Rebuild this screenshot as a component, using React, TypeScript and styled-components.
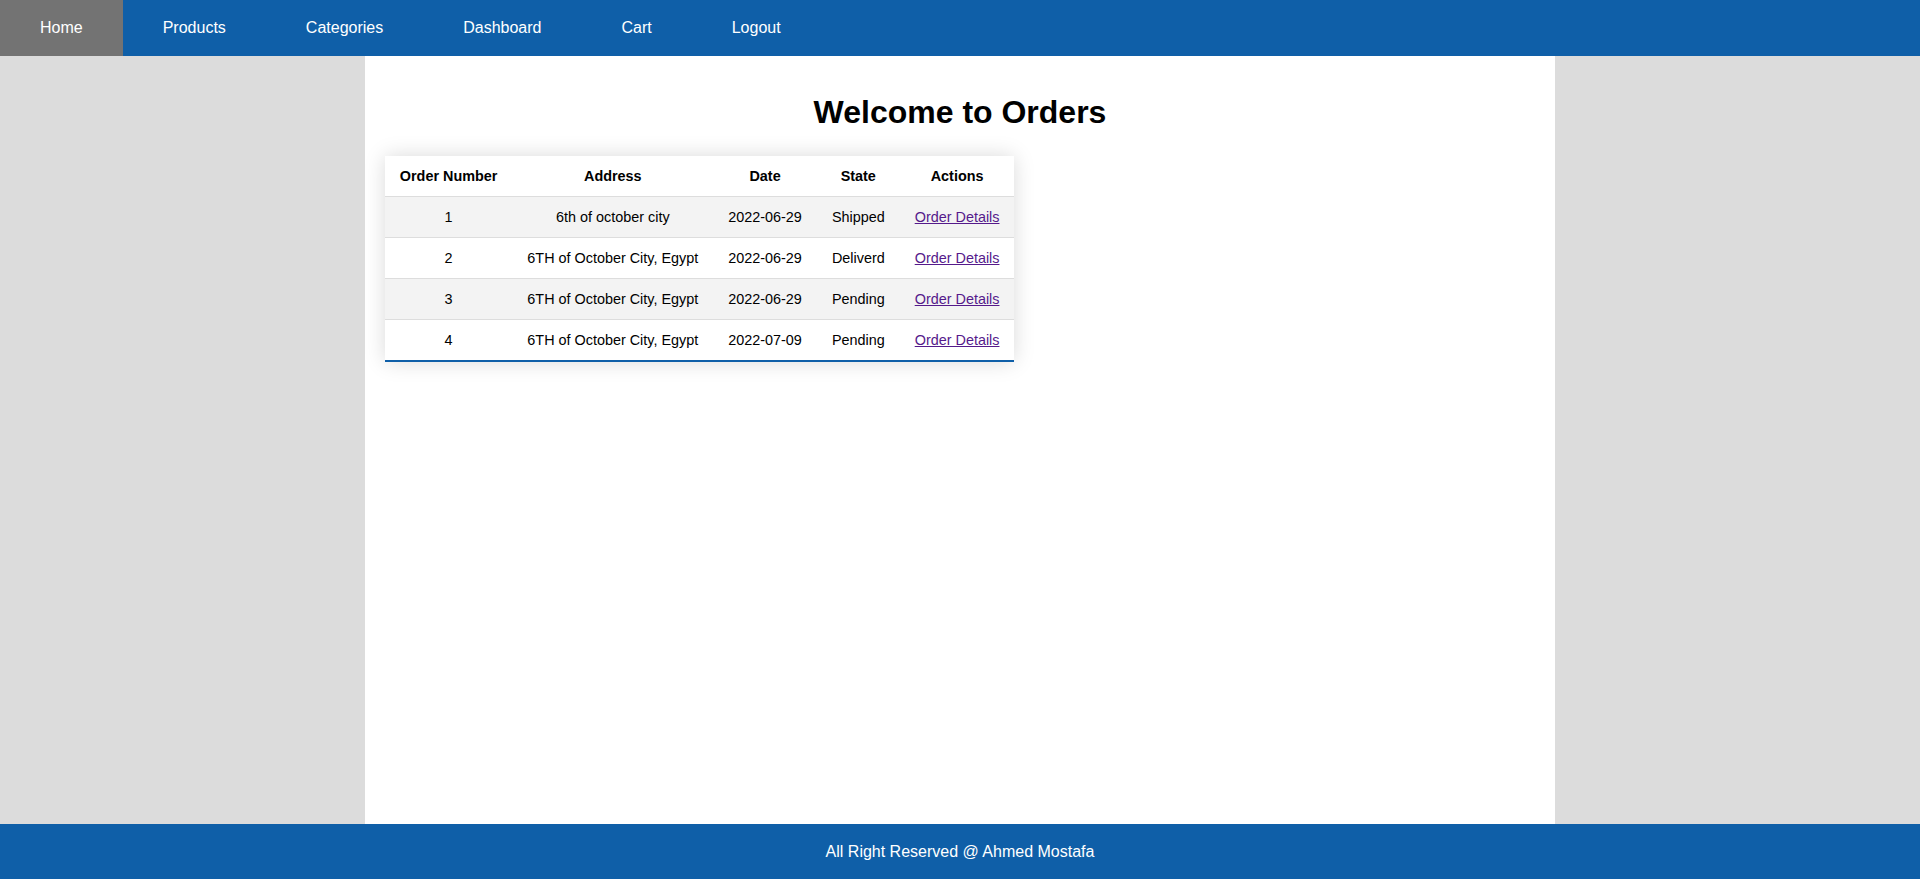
import React from "react";
import styled, { createGlobalStyle } from "styled-components";

const GlobalStyle = createGlobalStyle`
  html, body {
    margin: 0;
    padding: 0;
    font-family: "Liberation Sans", Arial, sans-serif;
    background: #dcdcdc;
  }
  * { box-sizing: border-box; }
`;

const Page = styled.div`
  display: flex;
  flex-direction: column;
  min-height: 100vh;
`;

const NavBar = styled.nav`
  display: flex;
  height: 56px;
  background: #0f5fa8;
`;

const NavLink = styled.a<{ $active?: boolean }>`
  display: block;
  padding: 0 40px;
  line-height: 56px;
  font-size: 16px;
  color: #ffffff;
  text-decoration: none;
  background: ${(p) => (p.$active ? "#737373" : "transparent")};
  cursor: pointer;
`;

const Main = styled.main`
  flex: 1;
  display: flex;
  justify-content: center;
`;

const Content = styled.section`
  width: 62%;
  background: #ffffff;
  padding: 17px 20px 16px;
`;

const Title = styled.h1`
  margin: 21px 0;
  font-size: 32px;
  font-weight: bold;
  text-align: center;
  color: #000;
`;

const Table = styled.table`
  border-collapse: collapse;
  margin: 25px 0;
  font-size: 14.4px;
  min-width: 400px;
  box-shadow: 0 0 20px rgba(0, 0, 0, 0.15);
  color: #000;
`;

const HeadRow = styled.tr`
  background: #ffffff;
  border-bottom: 1px solid #dddddd;
`;

const Th = styled.th`
  padding: 12px 15px;
  text-align: center;
  font-weight: bold;
`;

const Row = styled.tr`
  border-bottom: 1px solid #dddddd;
  &:nth-of-type(odd) {
    background: #f3f3f3;
  }
  &:last-of-type {
    border-bottom: 2px solid #0f5fa8;
  }
`;

const Td = styled.td`
  padding: 12px 15px;
  text-align: center;
`;

const DetailsLink = styled.a`
  color: #551a8b;
  text-decoration: underline;
  cursor: pointer;
`;

const Footer = styled.footer`
  height: 55px;
  display: flex;
  align-items: center;
  justify-content: center;
  background: #0f5fa8;
  color: #ffffff;
  font-size: 16px;
`;

const navItems = ["Home", "Products", "Categories", "Dashboard", "Cart", "Logout"];

const orders = [
  { id: 1, address: "6th of october city", date: "2022-06-29", state: "Shipped" },
  { id: 2, address: "6TH of October City, Egypt", date: "2022-06-29", state: "Deliverd" },
  { id: 3, address: "6TH of October City, Egypt", date: "2022-06-29", state: "Pending" },
  { id: 4, address: "6TH of October City, Egypt", date: "2022-07-09", state: "Pending" },
];

export default function App() {
  return (
    <>
      <GlobalStyle />
      <Page>
        <NavBar>
          {navItems.map((item, i) => (
            <NavLink key={item} $active={i === 0}>
              {item}
            </NavLink>
          ))}
        </NavBar>
        <Main>
          <Content>
            <Title>Welcome to Orders</Title>
            <Table>
              <thead>
                <HeadRow>
                  <Th>Order Number</Th>
                  <Th>Address</Th>
                  <Th>Date</Th>
                  <Th>State</Th>
                  <Th>Actions</Th>
                </HeadRow>
              </thead>
              <tbody>
                {orders.map((o) => (
                  <Row key={o.id}>
                    <Td>{o.id}</Td>
                    <Td>{o.address}</Td>
                    <Td>{o.date}</Td>
                    <Td>{o.state}</Td>
                    <Td>
                      <DetailsLink>Order Details</DetailsLink>
                    </Td>
                  </Row>
                ))}
              </tbody>
            </Table>
          </Content>
        </Main>
        <Footer>All Right Reserved @ Ahmed Mostafa</Footer>
      </Page>
    </>
  );
}
